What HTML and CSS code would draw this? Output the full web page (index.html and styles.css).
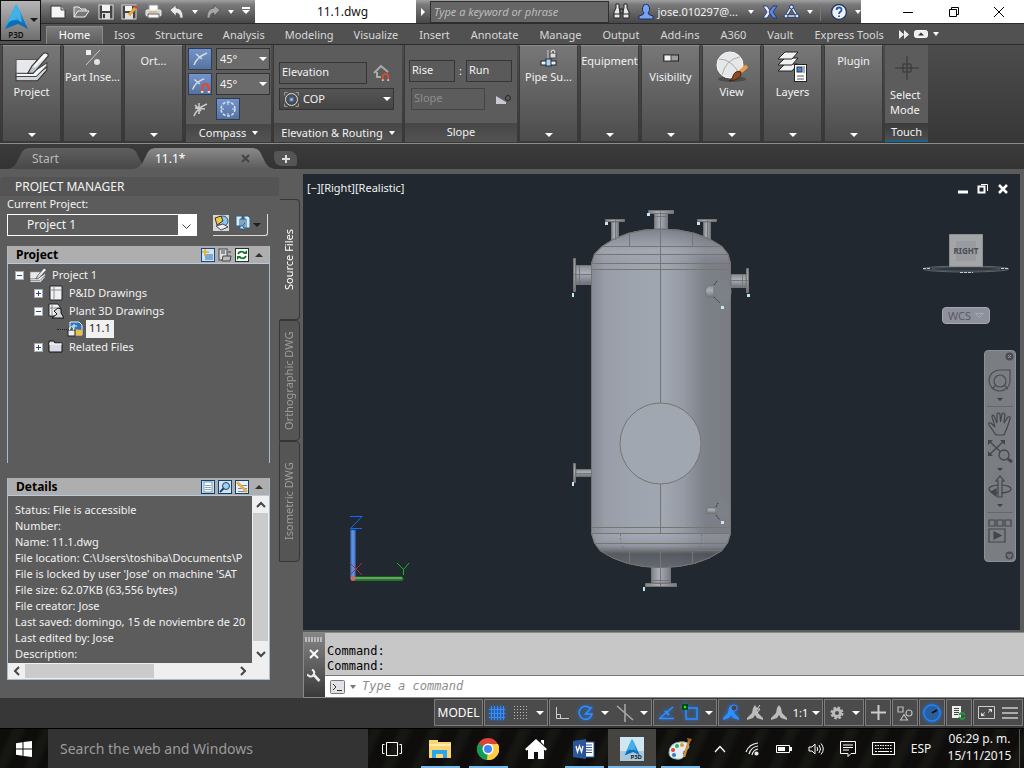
FILE: index.html
```html
<!DOCTYPE html>
<html lang="en">
<head>
<meta charset="utf-8">
<meta name="viewport" content="width=device-width, initial-scale=1">
<title>11.1.dwg</title>
<link rel="stylesheet" href="styles.css">
</head>
<body>
<svg width="0" height="0" class="defs" aria-hidden="true">
  <defs>
    <linearGradient id="blueA" x1="0" y1="0" x2="1" y2="1"><stop offset="0" stop-color="#5cc8f5"/><stop offset="1" stop-color="#0a5aa8"/></linearGradient>
    <linearGradient id="metal" x1="0" y1="0" x2="0" y2="1"><stop offset="0" stop-color="#fff"/><stop offset="1" stop-color="#b4bac2"/></linearGradient>
    <symbol id="logo" viewBox="0 0 24 26"><path d="M12 0 L16 7 L22 21 L24 25 L14 20 L12 13 L9 20 L1 25 L3 19 L9 6z" fill="url(#blueA)"/><path d="M12 0 L16 7 L18 20 L12 13 L9 20 L3 21 L9 6z" fill="#3fb2ea"/><path d="M5 18 Q13 12 23 23 L14 20 L1 25z" fill="#0b6fc0"/></symbol>
    <symbol id="stack" viewBox="0 0 32 28"><path d="M1 21H20L30 14V17L21 27H1z" fill="#d3d6da" stroke="#333"/><path d="M1 18H18L30 10V13L20 23H1z" fill="#f4f5f7" stroke="#444"/><path d="M1 7H21L14 20H1z" fill="#e6e8eb" stroke="#555"/><path d="M12 20L16 13 27 1Q32 0 31 4L19 18 17 20z" fill="url(#metal)" stroke="#333"/><path d="M18 14L28 3" stroke="#fff" stroke-width="1.500"/></symbol>
    <symbol id="arc" viewBox="0 0 20 20"><path d="M4 16 Q7 8 17 4 M6 5 L12 10" fill="none" stroke="#d5dde8" stroke-width="1.5"/></symbol>
    <symbol id="magnet" viewBox="0 0 10 10"><path d="M2 9 V5 a3 3 0 0 1 6 0 V9" fill="none" stroke="#e0492f" stroke-width="2"/><path d="M1 9 h2 M7 9 h2" stroke="#eee" stroke-width="1.5"/></symbol>
    <symbol id="wings" viewBox="0 0 18 18"><path d="M9 1 L11 4 L12 9 L17 14 V16 L11 14 L9 11 L7 14 L1 16 V14 L6 9 L7 4z" fill="currentColor"/></symbol>
    <symbol id="page" viewBox="0 0 14 16"><path d="M1 1H13V15H1z" fill="#eef1f5" stroke="#222"/><path d="M5 1V15M1 5H13" stroke="#8b8b8b"/></symbol>
  </defs>
</svg>

<header class="top">
  <button class="appbtn" aria-label="Application menu"><svg width="24" height="26"><use href="#logo"/></svg><span>P3D</span><i class="tri dark"></i></button>
  <div class="titlebar">
    <div class="qat">
      <button aria-label="New"><svg width="16" height="14" viewBox="0 0 16 14"><path d="M1 1H11L15 5V13H1z" fill="#f5f5f5" stroke="#333"/><path d="M11 1V5H15" fill="#bbb" stroke="#555"/></svg></button>
      <button aria-label="Open"><svg width="17" height="14" viewBox="0 0 17 14"><path d="M1 12V2H6L8 4H13V6" fill="#8c8c8c" stroke="#eee"/><path d="M1 12 L5 6H16L12 12z" fill="#777" stroke="#eee"/></svg></button>
      <button aria-label="Save"><svg width="16" height="16" viewBox="0 0 16 16"><rect x="1" y="1" width="14" height="14" fill="#444" stroke="#ddd"/><rect x="4" y="1" width="8" height="6" fill="#f3f3f3"/><rect x="4" y="9" width="8" height="6" fill="#ddd"/><path d="M6 10v4" stroke="#333" stroke-width="2"/></svg></button>
      <button aria-label="Save as"><svg width="17" height="16" viewBox="0 0 17 16"><rect x="1" y="1" width="14" height="14" fill="#444" stroke="#ddd"/><rect x="4" y="2" width="7" height="5" fill="#f3f3f3"/><rect x="4" y="9" width="8" height="6" fill="#ddd"/><path d="M8 11 L15 3" stroke="#e9a63a" stroke-width="3"/><path d="M14 4l2-2" stroke="#c44" stroke-width="3"/></svg></button>
      <button aria-label="Print"><svg width="17" height="16" viewBox="0 0 17 16"><path d="M4 7V1H13V7" fill="#fff" stroke="#999"/><rect x="1" y="6" width="15" height="6" rx="1" fill="#d5d5d5" stroke="#eee"/><path d="M3 14V10H14V14z" fill="#f6f6f6" stroke="#666"/><path d="M4 8H12" stroke="#e8a33a"/></svg></button>
      <button aria-label="Undo"><svg width="16" height="14" viewBox="0 0 16 14"><path d="M1 5 L7 0V3 Q14 3 14 13 H11 Q11 8 7 8V11z" fill="#e9e9e9" stroke="#555" stroke-width=".6"/></svg></button>
      <button class="tiny" aria-label="Undo list"><i class="tri s"></i></button>
      <button aria-label="Redo"><svg width="16" height="14" viewBox="0 0 16 14"><path d="M15 5 L9 0V3 Q2 3 2 13 H5 Q5 8 9 8V11z" fill="#a5a5a5" stroke="#444" stroke-width=".6"/></svg></button>
      <button class="tiny" aria-label="Redo list"><i class="tri s"></i></button>
      <button class="tiny" aria-label="Customize"><i class="tri bar"></i></button>
    </div>
    <div class="doctitle">11.1.dwg</div>
    <div class="info">
      <i class="tri right"></i>
      <input class="keyword" type="text" aria-label="Search" placeholder="Type a keyword or phrase">
      <button aria-label="Find"><svg width="17" height="17" viewBox="0 0 17 17"><g fill="#e8e8e8" stroke="#222"><path d="M3 1H6V5L7 8V15H1V9L3 5zM14 1H11V5L10 8V15H16V9L14 5z"/><path d="M7 6H10V10H7z" fill="#777"/><path d="M1 11H7M10 11H16"/></g></svg></button>
      <button class="user"><svg width="16" height="16" viewBox="0 0 16 16"><path d="M8 0a4 5 0 0 1 2 9q0 2 5 3v3H1v-3q5-1 5-3a4 5 0 0 1 2-9z" fill="#78a4ef" stroke="#1d2e63"/></svg><span>jose.010297@...</span><i class="tri s"></i></button>
      <button class="wide" aria-label="Exchange"><svg width="16" height="14" viewBox="0 0 16 14"><path d="M1 1H5L9 7 5 13H1L5 7z" fill="#e9eefc" stroke="#2c4183"/><path d="M15 1H11L7 7 11 13H15L11 7z" fill="#5f8be0" stroke="#23397a"/></svg></button>
      <button class="share" aria-label="Share"><svg width="17" height="15" viewBox="0 0 17 15"><path d="M8.500 3L3 12H14z" fill="none" stroke="#223a70" stroke-width="3"/><path d="M8.500 3L3 12H14z" fill="none" stroke="#dfe8fb" stroke-width="1.500"/><g fill="#dfe8fb" stroke="#223a70"><circle cx="8.500" cy="3" r="2"/><circle cx="3" cy="12" r="2"/><circle cx="14" cy="12" r="2"/></g></svg><i class="tri s"></i></button>
      <button class="help" aria-label="Help"><svg width="18" height="18" viewBox="0 0 18 18"><circle cx="9" cy="9" r="7.500" fill="#eef3fb" stroke="#2a3c5c" stroke-width="1.500"/><path d="M6.500 7q0-2.500 2.600-2.500T11.500 7q0 1-1.200 1.800T9 11M9 12.500v1.500" fill="none" stroke="#2457a6" stroke-width="1.800"/></svg><i class="tri s"></i></button>
    </div>
    <div class="winbtns">
      <button aria-label="Minimize"><svg width="12" height="12"><path d="M1 6.500H11" stroke="#000"/></svg></button>
      <button aria-label="Restore"><svg width="12" height="12" fill="none" stroke="#000"><path d="M1.500 3.500h7v7h-7zM3.500 3.500v-2h7v7h-2"/></svg></button>
      <button aria-label="Close"><svg width="12" height="12" stroke="#000"><path d="M1 1L11 11M11 1L1 11"/></svg></button>
    </div>
  </div>
  <nav class="tabs">
    <a href="#" class="on">Home</a><a href="#">Isos</a><a href="#">Structure</a><a href="#">Analysis</a><a href="#">Modeling</a><a href="#">Visualize</a><a href="#">Insert</a><a href="#">Annotate</a><a href="#">Manage</a><a href="#">Output</a><a href="#">Add-ins</a><a href="#">A360</a><a href="#">Vault</a><a href="#">Express Tools</a>
    <button aria-label="More tabs"><svg width="10" height="9"><path d="M0 0L5 4.500 0 9zM5 0L10 4.500 5 9z" fill="#eee"/></svg></button>
    <button aria-label="Minimize ribbon"><svg width="14" height="8"><rect x=".5" y=".5" width="13" height="7" rx="2" fill="#eee" stroke="#fff"/><path d="M4 5.500L7 2.500 10 5.500z" fill="#333"/></svg></button>
    <button aria-label="Ribbon options"><i class="tri s"></i></button>
  </nav>
</header>

<section class="ribbon">
  <button class="panel"><svg width="34" height="30"><use href="#stack"/></svg><span>Project</span><i class="tri"></i></button>
  <button class="panel"><svg class="low" width="18" height="18" viewBox="0 0 18 18"><path d="M16 1L2 16" stroke="#ccc"/><rect x="2" y="1" width="5" height="5" fill="#eee"/><circle cx="13" cy="13" r="3" fill="#dfe3ea"/></svg><span>Part Inse...</span><i class="tri"></i></button>
  <button class="panel bare"><span>Ort...</span><i class="tri"></i></button>
  <div class="group compass">
    <div class="cgrid">
      <button class="tog" aria-label="Compass"><svg width="20" height="20"><use href="#arc"/></svg></button>
      <label class="drop"><select aria-label="Angle"><option>45°</option></select></label>
      <button class="tog" aria-label="Snap"><svg width="22" height="20"><use href="#arc" width="18" height="20"/><use href="#magnet" x="11" y="8" width="11" height="11"/></svg></button>
      <label class="drop"><select aria-label="Snap angle"><option>45°</option></select></label>
      <button class="flat" aria-label="Tolerance"><svg width="16" height="16" fill="none" stroke="#ccc" stroke-width="1.500"><path d="M2 15Q5 7 15 3M3 4L9 10M7 2V13M3 7L13 8"/></svg></button>
      <button class="tog" aria-label="Toggle compass"><svg width="20" height="20" fill="none" stroke="#cfe0f5"><circle cx="10" cy="10" r="7" stroke-width="1.500" stroke-dasharray="3 1.500"/><path d="M10 3v3M10 14v3M3 10h3M14 10h3"/></svg></button>
    </div>
    <button class="cap">Compass <i class="tri s"></i></button>
  </div>
  <div class="group elev">
    <div class="egrid">
      <input type="text" aria-label="Elevation" value="Elevation">
      <button class="flat" aria-label="Elevation lock"><svg width="18" height="18" viewBox="0 0 18 18"><path d="M1 9L8 2 15 8M4 8V13H8" fill="none" stroke="#aaa" stroke-width="2"/><use href="#magnet" x="8" y="8" width="9" height="9"/></svg></button>
      <label class="drop cop"><svg width="17" height="17" fill="none" stroke="#999"><rect x="1.500" y="1.500" width="14" height="14" stroke-dasharray="3 8 3 0"/><circle cx="8.500" cy="8.500" r="6" stroke="#ddd"/><rect x="7" y="7" width="3" height="3" fill="#9fc5ff" stroke="#4d87d8"/></svg><select aria-label="Routing"><option>COP</option></select></label>
    </div>
    <button class="cap">Elevation &amp; Routing <i class="tri s"></i></button>
  </div>
  <div class="group slope">
    <div class="sgrid">
      <div class="srow"><input type="text" aria-label="Rise" value="Rise"><b>:</b><input type="text" aria-label="Run" value="Run"></div>
      <div class="srow"><input class="dis" type="text" aria-label="Slope" value="Slope" disabled><svg width="16" height="11"><path d="M0 2L10 8V10H0z" fill="#c7cad2"/><circle cx="12" cy="4" r="2.500" fill="none" stroke="#222"/></svg></div>
    </div>
    <div class="cap">Slope</div>
  </div>
  <button class="panel"><svg class="low" width="18" height="18" viewBox="0 0 18 18"><path d="M8 1v10" stroke="#ccc"/><rect x="10" y="4" width="6" height="5" fill="#ddd" stroke="#444"/><path d="M11 4q0-3 2-3t2 3" fill="none" stroke="#eee"/><rect x="1" y="12" width="15" height="4" fill="#e9f2fa" stroke="#223"/><rect x="6" y="10" width="5" height="7" fill="#aed0ea" stroke="#234"/></svg><span>Pipe Su...</span><i class="tri"></i></button>
  <button class="panel bare"><span>Equipment</span><i class="tri"></i></button>
  <button class="panel"><svg class="low" width="18" height="18" viewBox="0 0 18 18"><rect x="1.500" y="6" width="15" height="6" fill="#9c9c9c" stroke="#222"/><rect x="2" y="6" width="7" height="6" fill="#f2f2f2" stroke="#444"/></svg><span>Visibility</span><i class="tri"></i></button>
  <button class="panel"><svg width="32" height="32" viewBox="0 0 32 32"><ellipse cx="16" cy="28" rx="14" ry="3" fill="#4c4c4c"/><circle cx="14" cy="14" r="13" fill="#e6e7e8" stroke="#fafafa"/><path d="M3 8Q16 8 24 24M24 6Q10 8 6 24" fill="none" stroke="#aaa"/><path d="M31 15L23 22" stroke="#eb9b50" stroke-width="4"/><path d="M25 21q1 8-12 9 4-2 4-5 2-6 8-4z" fill="#8c4a22" stroke="#452410"/></svg><span>View</span><i class="tri"></i></button>
  <button class="panel"><svg width="32" height="32" viewBox="0 0 32 32"><g fill="#f1f1f1" stroke="#222"><path d="M1 20L8 13H21L15 20z"/><path d="M1 14L8 7H21L15 14z"/><path d="M1 8L8 1H21L15 8z"/></g><rect x="17.500" y="13.500" width="12" height="17" fill="#fff" stroke="#222"/><rect x="20" y="16" width="5" height="5" fill="#4d86c8" stroke="#235"/><path d="M27 15v7M20 25h7M20 28h7" stroke="#555"/></svg><span>Layers</span><i class="tri"></i></button>
  <button class="panel bare"><span>Plugin</span><i class="tri"></i></button>
  <button class="touch"><svg width="26" height="26" fill="none" stroke="#353535"><path d="M1 13H25M13 1V25M9 9h8v8h-8z"/></svg><span>Select Mode</span><em>Touch</em></button>
</section>

<nav class="files">
  <a href="#" class="ftab">Start</a>
  <a href="#" class="ftab on">11.1*<svg width="9" height="9"><path d="M1 1L8 8M8 1L1 8" stroke="#444" stroke-width="2"/></svg></a>
  <button class="plus" aria-label="New drawing"><svg width="10" height="10"><path d="M5 1V9M1 5H9" stroke="#ddd" stroke-width="2"/></svg></button>
</nav>

<main class="work">
  <aside class="palette">
    <div class="pbody">
      <h1>PROJECT MANAGER</h1>
      <label class="cur" for="proj">Current Project:</label>
      <div class="prow">
        <div class="combo"><select id="proj"><option>Project 1</option></select><svg width="9" height="6"><path d="M.5.500L4.500 4.500 8.500.500" fill="none" stroke="#444"/></svg></div>
        <div class="ptools">
          <button aria-label="Publish"><svg width="16" height="16" viewBox="0 0 16 16"><rect width="16" height="16" fill="#d9d7cd"/><circle cx="10" cy="6" r="5" fill="#8fc3e8" stroke="#357"/><path d="M2 3L8 1 10 6 4 10z" fill="#ecc54a" stroke="#333"/><path d="M3 11L10 9 15 12 8 15z" fill="#eee" stroke="#446"/></svg></button>
          <button aria-label="Reports"><svg width="16" height="16" viewBox="0 0 16 16" fill="#d8ecf8" stroke="#2d5f86"><path d="M1 1H7V11H1zM5 4H11V14H5zM9 1H13L15 3V13H9z"/><path d="M9 13Q6 11 10 8" fill="none"/></svg></button>
          <i class="tri dark"></i>
        </div>
      </div>
      <section class="box tree">
        <h2>Project<span class="tools">
          <button aria-label="New drawing"><svg width="14" height="14" viewBox="0 0 14 14"><rect x=".5" y=".5" width="13" height="13" fill="#cfe4f5" stroke="#1a4a80"/><path d="M4 6H12V12H4z" fill="#7fa9cf"/><path d="M4 1v7M1 4h7" stroke="#e8a826" stroke-width="1.500"/></svg></button>
          <button aria-label="Copy"><svg width="14" height="14" viewBox="0 0 14 14"><rect x="1" y="1" width="8" height="11" fill="#ddd" stroke="#444"/><path d="M5 8H13L12 13H4z" fill="#bbb" stroke="#444"/><path d="M3 3h4M3 5h4M10 4h3" stroke="#444"/></svg></button>
          <button aria-label="Refresh"><svg width="14" height="14" viewBox="0 0 14 14"><rect x=".5" y=".5" width="13" height="13" fill="#fff" stroke="#2c2c2c"/><path d="M3 6Q5 2 10 5M11 8Q9 12 4 9" fill="none" stroke="#167a2c" stroke-width="1.800"/><path d="M8 6h4V2zM6 8H2v4z" fill="#167a2c"/></svg></button>
          <i class="tri up"></i></span></h2>
        <ul>
          <li class="l0"><i class="ex m"></i><svg width="18" height="15"><use href="#stack"/></svg>Project 1</li>
          <li class="l1"><i class="ex p"></i><svg width="14" height="16"><use href="#page"/></svg>P&amp;ID Drawings</li>
          <li class="l1"><i class="ex m"></i><svg width="16" height="16" viewBox="0 0 16 16"><path d="M1 1H10L12 4V13H1z" fill="#eef1f5" stroke="#222"/><path d="M4 1V13M1 5H12" stroke="#888"/><path d="M6 8L10 5 13 6V10L16 15H4L9 11z" fill="#d6d9dd" stroke="#111"/></svg>Plant 3D Drawings</li>
          <li class="l2"><i class="dots"></i><svg width="17" height="16" viewBox="0 0 17 16"><path d="M3 1H12L15 4V14H3z" fill="#2f73b8" stroke="#eef"/><path d="M5 8L15 9V14H9z" fill="#f0be3c"/><path d="M7 3V8M5 5H10" stroke="#dff"/><rect x="1" y="9" width="7" height="6" fill="#eee" stroke="#222"/><path d="M2.500 9V7q2-3 4 0V9" fill="none" stroke="#eee"/></svg><span>11.1</span></li>
          <li class="l1"><i class="ex p"></i><svg width="16" height="14"><path d="M1 12V1H6L7 3H14V12z" fill="#d9dbe6" stroke="#111"/><path d="M1 4H14" stroke="#fff"/></svg>Related Files</li>
        </ul>
      </section>
      <section class="box details">
        <h2>Details<span class="tools">
          <button aria-label="Details"><svg width="14" height="14"><rect x=".5" y=".5" width="13" height="13" fill="#cfe4f5" stroke="#12406f"/><rect x="3" y="2" width="8" height="10" fill="#fff" stroke="#7799bb"/><path d="M4 5.500h6M4 7.500h6M4 9.500h6" stroke="#8ab"/></svg></button>
          <button aria-label="Preview"><svg width="14" height="14"><rect x=".5" y=".5" width="13" height="13" fill="#cfe4f5" stroke="#12406f"/><circle cx="8" cy="6" r="3.500" fill="#9fd0ee" stroke="#246"/><path d="M2 12L6 8" stroke="#246" stroke-width="2"/></svg></button>
          <button aria-label="Work history"><svg width="14" height="14"><rect x=".5" y=".5" width="13" height="13" fill="#e8eef3" stroke="#12406f"/><path d="M3 5.500h9M3 8.500h9M3 11.500h8" stroke="#789"/><path d="M2 2L12 12" stroke="#e8b04a" stroke-width="2.500"/></svg></button>
          <i class="tri up"></i></span></h2>
        <div class="dgrid">
          <div class="dtext">Status: File is accessible
Number:
Name: 11.1.dwg
File location: C:\Users\toshiba\Documents\P
File is locked by user 'Jose' on machine 'SAT
File size: 62.07KB (63,556 bytes)
File creator: Jose
Last saved: domingo, 15 de noviembre de 20
Last edited by: Jose
Description:</div>
          <div class="vbar"><svg width="10" height="7"><path d="M1 6L5 2 9 6" /></svg><span></span><svg width="10" height="7"><path d="M1 1L5 5 9 1"/></svg></div>
          <div class="hbar"><svg width="7" height="10"><path d="M6 1L2 5 6 9"/></svg><span></span><svg width="7" height="10"><path d="M1 1L5 5 1 9"/></svg></div>
        </div>
      </section>
    </div>
    <div class="vtabs"><a href="#" class="on">Source Files</a><a href="#">Orthographic DWG</a><a href="#">Isometric DWG</a></div>
  </aside>

  <div class="right">
    <section class="canvas">
      <div class="vlabel">[−][Right][Realistic]</div>
      <svg class="vessel" width="200" height="400" viewBox="561 202 200 400" role="img" aria-label="Pressure vessel">
        <defs>
          <linearGradient id="shell"><stop offset="0" stop-color="#858a93"/><stop offset=".1" stop-color="#989da7"/><stop offset=".3" stop-color="#9ea4ae"/><stop offset=".52" stop-color="#a1a7b1"/><stop offset=".66" stop-color="#959aa4"/><stop offset=".82" stop-color="#7c8088"/><stop offset="1" stop-color="#7a7d83"/></linearGradient>
          <linearGradient id="dome" x2="0" y2="1"><stop offset="0" stop-color="#565a62" stop-opacity=".5"/><stop offset=".65" stop-color="#aab0bd" stop-opacity=".35"/><stop offset="1" stop-color="#9096a0" stop-opacity=".1"/></linearGradient>
          <linearGradient id="bowl" x2="0" y2="1"><stop offset="0" stop-color="#aab2c0" stop-opacity=".3"/><stop offset=".35" stop-color="#868b94" stop-opacity=".5"/><stop offset=".5" stop-color="#5c5f65" stop-opacity=".7"/><stop offset=".6" stop-color="#46494e" stop-opacity=".8"/><stop offset="1" stop-color="#5d626c" stop-opacity=".9"/></linearGradient>
          <linearGradient id="nv"><stop offset="0" stop-color="#7d828a"/><stop offset=".4" stop-color="#a9afba"/><stop offset="1" stop-color="#767a82"/></linearGradient>
          <linearGradient id="nh" x2="0" y2="1"><stop offset="0" stop-color="#868b94"/><stop offset=".4" stop-color="#a9afba"/><stop offset="1" stop-color="#6c7077"/></linearGradient>
        </defs>
        <g stroke="#777572">
          <g fill="url(#nv)"><path d="M654.500 213V232H667.500V213z"/><path d="M648.500 210.500H673.500V213.500H648.500z"/><path d="M611.500 222V242H618.500V222z"/><path d="M605.500 219.500H624.500V221.500H605.500z"/><path d="M703.500 222V242H710.500V222z"/><path d="M697.500 219.500H716.500V221.500H697.500z"/><path d="M651.500 565V583H670.500V565z"/><path d="M645.500 583.500H676.500V586.500H645.500z"/></g>
          <g fill="url(#nh)"><path d="M576 265.500H592V284.500H576z"/><path d="M573.500 258.500H575.500V291.500H573.500z"/><path d="M731 274.500H746V287.500H731z"/><path d="M746.500 268.500H748.500V292.500H746.500z"/><path d="M576 469.500H592V476.500H576z"/><path d="M573.500 463.500H575.500V482.500H573.500z"/></g>
          <path d="M591.500 263.500L594.500 254 602 246.500Q625 229 661 229Q698 229 722 246.500L728 254 730.500 263.500V533.500L727.500 543 722 550.500Q698 567.500 661 567.500Q624 567.500 600 550.500L594.500 543 591.500 533.500z" fill="url(#shell)"/>
          <path d="M591.500 263.500L594.500 254 602 246.500Q625 229 661 229Q698 229 722 246.500L728 254 730.500 263.500z" fill="url(#dome)"/>
          <path d="M591.500 533.500L594.500 543 600 550.500Q624 567.500 661 567.500Q698 567.500 722 550.500L727.500 543 730.500 533.500z" fill="url(#bowl)"/>
          <g fill="none"><path d="M602 246.500H722M595 254.500H728M591 263.500H731M591 269.500H731M592 527.500H731M592 533.500H731M594 543.500H728M600 550.500H722M629.500 234V246M692.500 234V246M629.500 550V563M692.500 550V563M660.500 210V404M660.500 484V533M660.500 550V587M579.500 265V285M742.500 274V288M574 274.500H592M731 280.500H749M576 473.500H592M615.500 219V240M707.500 219V240M654 216.500H668M651 580.500H671"/><path d="M620.500 534Q620 544 625 550M701.500 534Q702 544 698 550" stroke-dasharray="2 2"/></g>
          <circle cx="660.500" cy="443.500" r="40.500" fill="#a1a7b0"/>
          <path d="M714 285.500H708Q703 291 708 297.500H714z" fill="url(#nh)"/><ellipse cx="722.500" cy="291.500" rx="8.500" ry="12.500" fill="#7c8088" stroke="#817f7d"/>
          <path d="M716 507.500H707V513.500H716z" fill="url(#nh)"/><ellipse cx="722.500" cy="511" rx="6.500" ry="9.500" fill="#7c8088" stroke="#817f7d"/>
        </g>
        <path d="M714 285L717 281M714 297L720 303M716 507L718 503M716 515L720 520" stroke="#34383e" stroke-dasharray="2 1"/>
        <g fill="#bfe9f7"><path d="M647 213h3v3h-3zM605 222h3v3h-3zM697 222h3v3h-3zM572 293h2v4h-2zM747 294h3v3h-3zM721 306h3v3h-3zM572 482h2v4h-2zM721 521h3v3h-3zM643 587h2v4h-2z"/></g>
      </svg>
      <div class="mdi"><button aria-label="Minimize drawing"><svg width="12" height="12"><path d="M1 9H11" stroke="#fff" stroke-width="3"/></svg></button><button aria-label="Restore drawing"><svg width="12" height="12" fill="none" stroke="#fff"><path d="M1.500 3.500h6v6h-6z" stroke-width="2"/><path d="M4 1.500h6.500V8"/></svg></button><button aria-label="Close drawing"><svg width="12" height="12"><path d="M2 2L10 10M10 2L2 10" stroke="#fff" stroke-width="2.500"/></svg></button></div>
      <div class="cube">
        <svg width="88" height="42" viewBox="0 0 88 42"><ellipse cx="44" cy="36" rx="43" ry="3" fill="#30373e" stroke="#5f666c"/><ellipse cx="44" cy="36" rx="34" ry="2" fill="none" stroke="#4b5258"/><path d="M1 35.500H9M79 35.500H87M38 39.500h13" stroke="#ccc" stroke-dasharray="3 1"/><path d="M27.500 1.500H60.500V33.500H27.500z" fill="#a3a5a6" stroke="#8d9092"/><rect x="34" y="8" width="20" height="20" fill="#989ca0"/></svg><span>RIGHT</span>
      </div>
      <button class="wcs">WCS <svg width="9" height="6"><path d="M.5.500H8.500L4.500 4.500z" fill="none" stroke="#a7a8b2"/></svg></button>
      <div class="navbar">
        <button class="edge" aria-label="Close"><svg width="9" height="9"><circle cx="4.500" cy="4.500" r="4" fill="#4b4e53"/><path d="M3 3l3 3M6 3L3 6" stroke="#999"/></svg></button>
        <button aria-label="Wheel"><svg width="24" height="24" fill="none" stroke="#4a4d52" stroke-width="1.200"><path d="M12 1H22V13A10.500 10.500 0 1 1 12 1z"/><circle cx="12" cy="12" r="6"/><path d="M8 16L4 20M16 16L20 20"/></svg></button>
        <i class="tri nav"></i><hr>
        <button aria-label="Pan"><svg width="24" height="24" fill="none" stroke="#43464b" stroke-width="1.200"><path d="M8 23L1 13Q0 10 3 11L7 15 4 5Q4 2 6 4L9 11 9 2Q10 0 12 2L12.500 10 14 2Q16 0 17 3L16 11 20 5Q23 4 22 7L19 16 16 23z"/></svg></button>
        <button aria-label="Zoom"><svg width="26" height="24" fill="none" stroke="#43464b" stroke-width="1.300"><path d="M2 2L17 16M17 2L2 16"/><path d="M1 6V1H6zM13 1H18V6zM1 12V17H6z" fill="#43464b" stroke="none"/><circle cx="17" cy="16" r="5" fill="#7a7d81"/><path d="M21 20L25 23" stroke-width="3"/></svg></button>
        <i class="tri nav"></i>
        <button aria-label="Orbit"><svg width="24" height="24" fill="none" stroke="#43464b" stroke-width="1.200"><ellipse cx="12" cy="14" rx="11" ry="4"/><path d="M10 22V6H8L12 1 16 6H14V22z" fill="#7a7d81"/><path d="M3 17L8 14V21z" fill="#43464b"/></svg></button>
        <i class="tri nav"></i><hr>
        <button aria-label="ShowMotion"><svg width="24" height="25" fill="none" stroke="#43464b" stroke-width="1.200"><path d="M1 2h6v6H1zM9 2h6v6H9zM17 2h6v6h-6zM1 11H17V24H1z"/><path d="M6 14V21L13 17.500z" fill="#43464b"/></svg></button>
        <button class="edge" aria-label="Options"><svg width="9" height="9"><circle cx="4.500" cy="4.500" r="4" fill="#4b4e53"/><path d="M2 4h5M3 6h3" stroke="#999"/></svg></button>
      </div>
      <svg class="ucs" width="64" height="70" viewBox="347 514 64 70"><rect x="350.500" y="530" width="5" height="48" fill="#4d7fcc" stroke="#2e559a"/><path d="M353 530V576" stroke="#6fa0ea"/><path d="M355 576.500H402L404 578.500 402 581H355z" fill="#2f7030"/><path d="M355 578H402" stroke="#56ad55" stroke-width="2"/><circle cx="353" cy="578.500" r="2.500" fill="#c96a6a"/><path d="M350 516.500H362L350.500 528.500H362" fill="none" stroke="#0f68ff"/><path d="M350 563L362 575M362 563L350 575" stroke="#b03038"/><path d="M397 563L403.500 569.500 409 563M403.500 569V575" fill="none" stroke="#18b818"/></svg>
    </section>
    <section class="cmd">
      <div class="grip"><i></i><button aria-label="Close"><svg width="10" height="10"><path d="M1 1L9 9M9 1L1 9" stroke="#fff" stroke-width="2"/></svg></button><button aria-label="Customize"><svg width="14" height="14" viewBox="0 0 14 14"><path d="M6 5L12.500 12" stroke="#eee" stroke-width="2.600"/><path d="M5 .5Q8 2 7 5T3 7.500L0 5.500" fill="none" stroke="#eee" stroke-width="2"/></svg></button></div>
      <div class="cbody"><div class="hist">Command:<br>Command:</div>
        <div class="cin"><svg width="15" height="14"><rect x=".5" y=".5" width="14" height="13" rx="1" fill="#dfe3e8" stroke="#777"/><path d="M3 4L6 7 3 10M7 10.500H12" fill="none" stroke="#333"/></svg><i class="tri grey"></i><input type="text" aria-label="Command" placeholder="Type a command"></div></div>
    </section>
  </div>
</main>

<footer class="status">
  <div class="sg"><button class="model">MODEL</button></div>
  <div class="sg"><button class="on" aria-label="Grid"><svg width="16" height="16" stroke="#2f8fff"><path d="M2.500 1V15M5.500 1V15M8.500 1V15M11.500 1V15M14.500 1V15M0 4.500H16M0 8.500H16M0 12.500H16"/></svg></button><button aria-label="Snap"><svg width="16" height="16" stroke="#bbb" stroke-dasharray="1 2"><path d="M1 1.500H16M1 4.500H16M1 7.500H16M1 10.500H16M1 13.500H16"/></svg></button><button class="ar" aria-label="Snap menu"><i class="tri"></i></button></div>
  <div class="sg"><button aria-label="Ortho"><svg width="14" height="14" fill="none" stroke="#ccc"><path d="M1.500 1V12.500H14M1.500 8.500H5.500V12"/></svg></button><button class="on" aria-label="Polar"><svg width="16" height="16" fill="none" stroke="#2f8fff" stroke-width="1.500"><path d="M12 3A6.500 6.500 0 1 0 14 9H7.500L14 2"/></svg></button><button class="ar" aria-label="Polar menu"><i class="tri"></i></button><button class="w26" aria-label="Isoplane"><svg width="18" height="20" stroke="#aaa" stroke-width="1.500"><path d="M9 1V19M1 3L17 17"/></svg></button><button class="ar" aria-label="Isoplane menu"><i class="tri"></i></button></div>
  <div class="sg"><button class="on" aria-label="Tracking"><svg width="17" height="14" stroke="#2f8fff" fill="none" stroke-width="1.500"><path d="M1 12.500H16M2 12L15 1"/><path d="M7 5l4 4" stroke-width="2"/></svg></button><button class="on" aria-label="Object snap"><svg width="17" height="17" fill="none" stroke="#2f8fff" stroke-width="1.500"><path d="M4 4H15V15H4z"/><rect x="1" y="1" width="4" height="4" fill="#0f0" stroke="#030"/></svg></button><button class="ar" aria-label="Snap modes"><i class="tri"></i></button></div>
  <div class="sg"><button class="on blue" aria-label="Annotation visibility"><svg width="18" height="18"><use href="#wings"/><circle cx="12" cy="4" r="3" fill="#444" stroke="#2f8fff"/></svg></button><button aria-label="Auto scale"><svg width="18" height="18"><use href="#wings"/><path d="M14 1L11 5H14L11 9" fill="none" stroke="#ddd"/></svg></button><button aria-label="Annotation scale"><svg width="18" height="18"><use href="#wings"/></svg></button><button class="scale">1:1<i class="tri"></i></button></div>
  <div class="sg"><button aria-label="Workspace"><svg width="14" height="14"><circle cx="7" cy="7" r="5" fill="none" stroke="#bbb" stroke-width="3" stroke-dasharray="2.400 1.500"/><circle cx="7" cy="7" r="3.500" fill="none" stroke="#bbb" stroke-width="3"/></svg></button><button class="ar" aria-label="Workspaces"><i class="tri"></i></button></div>
  <div class="sg"><button aria-label="Monitor"><svg width="15" height="15"><path d="M7.500 0V15M0 7.500H15" stroke="#ccc" stroke-width="2"/></svg></button></div>
  <div class="sg"><button aria-label="Isolate"><svg width="16" height="16" fill="none" stroke="#bbb" stroke-width="1.200"><path d="M1 2h5v5H1zM3.500 15L7 9.500 10.500 15z"/><circle cx="12" cy="8" r="3"/></svg></button></div>
  <div class="sg"><button class="on" aria-label="Hardware"><svg width="20" height="20"><circle cx="10" cy="10" r="8" fill="#2a5f9e" stroke="#1d86ff" stroke-width="1.500"/><path d="M10 10L15 7" stroke="#111" stroke-width="2"/></svg></button></div>
  <div class="sg"><button aria-label="Trusted"><svg width="16" height="16"><rect x="1" y="1" width="9" height="12" fill="#eee"/><path d="M3 3.500h5M3 5.500h5M3 7.500h5M3 9.500h4" stroke="#444"/><path d="M8 10q3-4 6 0M14 12q-3 4-6 0" fill="none" stroke="#1d9c3c" stroke-width="2"/></svg></button></div>
  <div class="sg"><button aria-label="Clean screen"><svg width="17" height="13" fill="none" stroke="#ccc"><path d="M.5.500H16.500V12.500H.5z"/><path d="M4 9L7 6.500M13 4L10 6.500"/><path d="M3 6.500V10H7zM10 3H14V6.500z" fill="#ddd" stroke="none"/></svg></button><button aria-label="Customization"><svg width="16" height="14"><path d="M0 2H16M0 7H16M0 12H16" stroke="#ccc" stroke-width="1.500"/></svg></button></div>
</footer>

<footer class="taskbar">
  <button aria-label="Start"><svg width="16" height="16" fill="#fff"><path d="M0 2.300L6.500 1.300V7.500H0zM7.500 1.100L16 0V7.500H7.500zM0 8.500H6.500V14.700L0 13.700zM7.500 8.500H16V16L7.500 14.900z"/></svg></button>
  <input class="cortana" type="text" aria-label="Search" placeholder="Search the web and Windows">
  <button aria-label="Task view"><svg width="20" height="14" fill="none" stroke="#fff"><path d="M4.500.500H15.500V13.500H4.500zM2.500 2.500H.5V11.500H2.500M17.500 2.500H19.500V11.500H17.500"/></svg></button>
  <button class="run" aria-label="File Explorer"><svg width="22" height="20"><path d="M0 1H9V3H22V19H0z" fill="#f7d673"/><path d="M0 5H22V7H0z" fill="#fdeaa9"/><path d="M3 19V11H18V19H14V15H7V19z" fill="#2ba5e5"/></svg></button>
  <button class="run" aria-label="Chrome"><svg width="22" height="22"><circle cx="11" cy="11" r="11" fill="#db4437"/><path d="M11 11L1.500 5.500A11 11 0 0 0 10 22z" fill="#0f9d58"/><path d="M11 11L10 22A11 11 0 0 0 21 6H11z" fill="#ffcd40"/><circle cx="11" cy="11" r="5.500" fill="#fff"/><circle cx="11" cy="11" r="4" fill="#4285f4"/></svg></button>
  <button aria-label="Home"><svg width="22" height="20" fill="#fff"><path d="M11 0L22 10 20 12V11H19V20H13V13H9V20H3V11H2V12L0 10zM16 1h3v5l-3-3z"/></svg></button>
  <button class="run" aria-label="Word"><svg width="22" height="20"><rect x="11" y="3" width="10" height="15" fill="#fff" stroke="#2b579a"/><path d="M13 6h6M13 8.500h6M13 11h6M13 13.500h6" stroke="#2b579a"/><path d="M0 2L13 0V20L0 18z" fill="#2b579a"/><path d="M3 7L4.500 13 6.500 7 8.500 13 10 7" fill="none" stroke="#fff" stroke-width="1.300"/></svg></button>
  <button class="run act" aria-label="Plant 3D"><svg width="24" height="24"><rect width="24" height="24" fill="#cfe6f3"/><rect y="14" width="24" height="10" fill="#a9c8da"/><use href="#logo" x="3" y="2" width="18" height="17"/></svg><em>P3D</em></button>
  <button class="run" aria-label="Paint"><svg width="24" height="22"><path d="M1 15Q1 5 12 4 21 3 21 9 20 12 16 13 14 15 16 18 14 22 8 21 1 20 1 15z" fill="#e4edf4" stroke="#8ba"/><circle cx="5" cy="12" r="2" fill="#d43"/><circle cx="9" cy="8" r="2" fill="#3a6"/><circle cx="14" cy="7" r="2" fill="#e93"/><circle cx="6" cy="17" r="2" fill="#37c"/><path d="M21 3L16 19" stroke="#d98c3c" stroke-width="2.500"/><path d="M19 0L24 1 21 6z" fill="#a5682c"/></svg></button>
  <div class="tray">
    <button aria-label="Hidden icons"><svg width="12" height="8"><path d="M1 7L6 1.500 11 7" fill="none" stroke="#fff" stroke-width="1.300"/></svg></button>
    <button aria-label="Network"><svg width="14" height="14" fill="none" stroke="#eee" stroke-width="1.200"><path d="M1 10Q4 2 13 1M4 12Q6 5 13 4M7 13Q8 8 13 7"/><circle cx="11.500" cy="11.500" r="1.500" fill="#fff"/></svg></button>
    <button aria-label="Battery"><svg width="16" height="10"><path d="M.5 1.500H13.500V8.500H.5z" fill="none" stroke="#fff"/><path d="M2 3H9V7H2zM14 3H16V7H14z" fill="#fff"/></svg></button>
    <button aria-label="Volume"><svg width="17" height="14" fill="none" stroke="#fff"><path d="M1 5H4L7 2V12L4 9H1zM9 5q1.500 2 0 4M11 3q3 4 0 8M13 1.500q4.500 5.500 0 11"/></svg></button>
    <button aria-label="Notifications"><svg width="16" height="16" fill="none" stroke="#fff"><path d="M.5.500H15.500V12.500H11L8 15.500V12.500H.5zM3 4H13M3 6.500H13M3 9H9"/></svg></button>
    <button class="kb" aria-label="Keyboard"><svg width="23" height="13" fill="none" stroke="#fff"><rect x=".5" y=".5" width="22" height="12"/><path d="M3 3.500H20M3 6.500H20" stroke-dasharray="1.500 1"/><path d="M3 9.500H20" stroke-dasharray="2 1 11 1"/></svg></button>
    <button class="lang">ESP</button>
    <button class="clock">06:29 p. m.<br>15/11/2015</button>
  </div>
</footer>
</body>
</html>
```
FILE: styles.css
```css
* { box-sizing: border-box; }
body {
  margin: 0; min-height: 100vh; display: flex; flex-direction: column;
  background: #373737; color: #f2f2f2;
  font: 12px/16px "Noto Sans", "Open Sans", sans-serif;
}
.defs { position: absolute; }
button, input, select { font: inherit; color: inherit; border: 0; background: none; padding: 0; margin: 0; min-width: 0; border-radius: 0; }
select { appearance: none; width: 100%; height: 100%; }
a { color: inherit; text-decoration: none; }
svg { display: block; flex: none; }
button { display: flex; align-items: center; justify-content: center; white-space: nowrap; }

.tri { display: block; flex: none; width: 0; height: 0; border: 4px solid transparent; border-top-color: #fff; border-bottom: 0; }
.tri.s { border-width: 4px 3px 0; }
.tri.dark { border-top-color: #1c1c1c; }
.tri.grey { border-top-color: #777; border-width: 4px 3px 0; }
.tri.up { border-top: 0; border-bottom: 4px solid #333; }
.tri.right { border: 4px solid transparent; border-left-color: #fff; border-right: 0; }
.tri.nav { border-width: 3px 3px 0; border-top-color: #3d4045; }
.tri.bar { position: relative; }
.tri.bar::before { content: ""; position: absolute; left: -4px; top: -7px; width: 8px; height: 2px; background: #fff; }

/* header */
.top { display: grid; grid-template: 24px 20px / 41px 1fr; background: #515151; }
.appbtn {
  grid-row: 1 / 3; height: 41px; position: relative; flex-direction: column; color: #111;
  background: linear-gradient(#b5b5b5, #6f6f6f); border: 1px solid #111; padding: 3px 9px 0 0; justify-content: flex-start;
}
.appbtn span { font-size: 8px; line-height: 10px; font-weight: 600; }
.appbtn .tri { position: absolute; right: 2px; top: 17px; }
.titlebar { display: flex; border-bottom: 1px solid #2c2c2c; }
.qat { display: flex; width: 214px; padding-left: 5px; background: linear-gradient(#a0a0a0, #7a7a7a 20%, #474747); }
.qat button { width: 24px; }
.qat .tiny { width: 12px; }
.qat .tiny:last-child { width: 18px; }
.doctitle { flex: 1; min-width: 80px; background: #fff; color: #111; text-align: center; line-height: 23px; padding-left: 14px; }
.info { display: flex; align-items: center; background: linear-gradient(#a0a0a0, #7a7a7a 20%, #474747); width: 445px; padding-left: 5px; }
.keyword { width: 180px; height: 22px; margin-left: 5px; background: #666; border: 1px solid #2f2f2f; padding: 0 3px; font-style: italic; font-size: 11px; }
.keyword::placeholder { color: #bdbdbd; opacity: 1; }
.info button { gap: 7px; margin-left: 4px; }
.info .user { margin-left: 8px; }
.user span { width: 84px; font-size: 11px; text-align: left; margin-left: -3px; }
.info .wide { margin-left: 8px; }
.info .share { margin-left: 6px; }
.info .help { margin-left: 7px; padding-left: 9px; border-left: 1px solid #777; }
.winbtns { display: flex; background: #fff; width: 163px; padding: 0 2px 0 24px; }
.winbtns button { width: 46px; }
.tabs { display: flex; align-items: flex-end; padding-left: 5px; color: #d8d8d8; overflow: hidden; }
.tabs a { font-size: 11px; line-height: 18px; height: 18px; padding: 0 10px; white-space: nowrap; flex: none; }
.tabs a:nth-of-type(n+7) { margin-left: 1px; }
.tabs .on { color: #fff; background: linear-gradient(#7c7c7c, #5c5c5c); border: 1px solid #8a8a8a; border-bottom: 0; line-height: 16px; width: 57px; text-align: center; margin-right: 1px; }
.tabs button { height: 20px; margin-left: 5px; }

/* ribbon */
.ribbon { display: flex; gap: 2px; padding: 0 3px 1px 2px; height: 100px; background: linear-gradient(#4c4c4c, #373737); border-bottom: 1px solid #8b8b8b; border-top: 1px solid #2c2c2c; }
.panel { width: 59px; border: 1px solid #3a3a3a; border-top-color: #8c8c8c; background: linear-gradient(#777, #4c4c4c); flex-direction: column; justify-content: flex-start; padding: 5px 0 4px; overflow: hidden; font-size: 11px; }
.panel svg { height: 32px; }
.panel .low { height: 18px; }
.panel span { line-height: 16px; padding-top: 1px; }
.panel .low { margin-top: -2px; margin-bottom: 1px; }
.panel.bare { padding-top: 6px; }
.panel .tri { margin-top: auto; }
.group { display: flex; flex-direction: column; background: #5c5c5c; border-left: 1px solid #3a3a3a; font-size: 11px; }
.cap { margin-top: auto; height: 19px; line-height: 18px; background: linear-gradient(#464646, #535353); text-align: center; gap: 6px; }
.compass { width: 86px; } .elev { width: 129px; } .slope { width: 113px; }
.cgrid { display: grid; grid-template: 23px 23px 23px / 24px 54px; gap: 2px 4px; padding: 3px 2px; }
.tog { background: linear-gradient(#7393ca, #57739f); border: 1px solid #2d3c57; height: 22px; width: 24px; }
.flat { width: 24px; height: 22px; }
.drop { position: relative; display: flex; align-items: center; border: 1px solid #333; background: #6b6b6b; height: 22px; }
.drop select { padding-left: 3px; }
.drop::after { content: ""; position: absolute; right: 2px; top: 8px; border: 4px solid transparent; border-top-color: #fff; border-bottom: 0; pointer-events: none; }
.egrid { display: grid; grid-template-columns: 88px 24px; gap: 4px 3px; padding: 17px 5px 0; }
.group input { background: #5a5a5a; border: 1px solid #353535; height: 22px; padding: 0 2px 3px; width: 100%; }
.group .cop { grid-column: 1 / 3; background: linear-gradient(#555, #454545); padding-left: 3px; }
.sgrid { padding: 15px 5px 0 4px; display: grid; gap: 6px; }
.srow { display: flex; align-items: center; justify-content: space-between; }
.srow input { width: 46px; } .srow b { font-weight: 400; }
.group .dis { width: 74px; margin-left: 2px; color: #8d8d8d; border-color: #444; background: none; }
.touch { width: 43px; flex-direction: column; background: #5c5c5c; font-size: 11px; padding-top: 10px; justify-content: flex-start; }
.touch span { white-space: normal; line-height: 15px; text-align: left; width: 33px; padding-top: 6px; }
.touch em { font-style: normal; margin-top: auto; width: 100%; height: 19px; line-height: 17px; background: linear-gradient(#3a3a3a, #4e4e4e); border-bottom: 2px solid #17658f; }

/* file tabs */
.files { display: flex; height: 25px; padding: 3px 0 0 8px; background: linear-gradient(#3b3b3b, #333); align-items: flex-end; }
.ftab {
  display: flex; align-items: center; justify-content: space-between; width: 142px; height: 21px; padding: 0 24px; color: #b9b9b9;
  background: linear-gradient(#5f5f5f, #484848);
  clip-path: polygon(0 100%, 5px 90%, 8px 75%, 14px 18%, 17px 5%, 21px 0, calc(100% - 21px) 0, calc(100% - 17px) 5%, calc(100% - 14px) 18%, calc(100% - 8px) 75%, calc(100% - 5px) 90%, 100% 100%);
}
.ftab.on { width: 140px; margin-left: -16px; padding: 0 24px 0 21px; color: #fff; background: linear-gradient(#8a8a8a, #5c5c5c); }
.plus { width: 23px; height: 15px; margin: 0 0 3px; background: #555; border-radius: 3px 8px 3px 8px; }

/* palette */
.work { flex: 1; display: flex; background: #5c5c5c; padding-top: 5px; }
.palette { width: 303px; display: flex; flex: none; }
.pbody { width: 279px; padding: 3px 9px 18px 7px; display: flex; flex-direction: column; }
h1 { margin: 0 -9px 0 -7px; padding: 0 15px; font-size: 12px; line-height: 19px; font-weight: 400; background: #545454; border-radius: 4px 4px 0 0; }
.cur { line-height: 15px; font-size: 11px; }
.prow { display: flex; justify-content: space-between; margin-top: 3px; }
.combo { position: relative; width: 190px; height: 22px; border: 1px solid #fff; }
.combo select { padding: 0 19px; border-right: 18px solid #fff; }
.combo svg { position: absolute; right: 5px; top: 9px; pointer-events: none; }
.ptools { display: flex; gap: 6px; width: 55px; height: 22px; border-right: 1px solid #ddd; border-bottom: 1px solid #ddd; border-radius: 0 0 3px; align-items: flex-start; padding-top: 1px; margin-right: 2px; }
.ptools .tri { margin: 8px 0 0 -4px; }
.box h2 { margin: 0; display: flex; justify-content: space-between; padding: 0 6px 0 8px; font-size: 12px; line-height: 17px; height: 18px; color: #000; background: #aeaeae; border-bottom: 1px solid #b9cbdb; font-weight: 700; }
.tools { display: flex; gap: 3px; align-items: center; }
.tools .tri { margin-left: 3px; }
.tree { margin-top: 10px; height: 217px; border: 1px solid #a9bccb; border-width: 0 1px; }
ul { list-style: none; margin: 2px 0; padding: 0; font-size: 11px; }
li { display: flex; align-items: center; gap: 5px; height: 18px; }
.l0 { padding-left: 7px; } .l1 { padding-left: 26px; } .l2 { padding-left: 49px; }
.l1 svg { width: 16px; }
.l2 span { background: #f1f1f1; color: #222; padding: 0 3px; height: 18px; margin-left: -3px; }
.ex { width: 9px; height: 9px; background: linear-gradient(#1d4d9a, #1d4d9a) center / 5px 1px no-repeat, #fff; border: 1px solid #aaa; }
.ex.p { background: linear-gradient(#1d4d9a, #1d4d9a) center / 5px 1px no-repeat, linear-gradient(#1d4d9a, #1d4d9a) center / 1px 5px no-repeat, #fff; }
.dots { width: 10px; border-top: 1px dotted #222; margin-right: -5px; }
.details { flex: 1; margin-top: 15px; display: flex; flex-direction: column; border: 1px solid #a9bccb; border-top: 0; }
.dgrid { flex: 1; display: grid; grid-template: minmax(0, 1fr) 16px / minmax(0, 1fr) 17px; background: #efefef; }
.dtext { background: #5c5c5c; white-space: pre; overflow: hidden; padding: 6px 0 0 7px; font-size: 11px; }
.vbar, .hbar { display: flex; align-items: center; gap: 5px; fill: none; stroke: #444; stroke-width: 2; }
.vbar { flex-direction: column; padding: 5px 0; }
.vbar span { width: 15px; flex: 1; background: #cbcbcb; margin-bottom: 5px; }
.hbar { padding: 0 5px; justify-content: space-between; }
.hbar span { width: 129px; height: 14px; background: #cbcbcb; margin-right: auto; }
.vtabs { width: 21px; padding-top: 25px; display: flex; flex-direction: column; }
.vtabs a { height: 121px; writing-mode: vertical-rl; transform: rotate(180deg); text-align: center; line-height: 18px; font-size: 11px; color: #9d9d9d; background: #555; border: 1px solid #363636; border-radius: 4px 0 0 4px; }
.vtabs .on { color: #fff; background: #5c5c5c; border-right-color: #5c5c5c; }

/* drawing */
.right { flex: 1; min-width: 0; display: flex; flex-direction: column; }
.canvas { flex: 1; position: relative; display: flex; align-items: center; justify-content: center; background: #212830; margin-right: 4px; padding-right: 1px; overflow: hidden; }
.vlabel { position: absolute; left: 4px; top: 6px; font-size: 11px; }
.mdi { position: absolute; right: 11px; top: 9px; display: flex; gap: 8px; }
.cube { position: absolute; right: 10px; top: 59px; }
.cube span { position: absolute; left: 28px; top: 11px; width: 32px; font-size: 8px; line-height: 14px; font-weight: 700; color: #454b52; text-align: center; }
.wcs { position: absolute; right: 30px; top: 133px; width: 48px; height: 17px; border-radius: 4px; background: #8e909c; border: 1px solid #a5a6b1; color: #585b66; font-size: 11px; gap: 4px; }
.navbar { position: absolute; right: 4px; top: 176px; width: 32px; height: 212px; background: #7a7d81; border: 1px solid #8e9194; border-radius: 4px; display: flex; flex-direction: column; align-items: center; }
.navbar hr { width: 26px; margin: 4px 0 2px; border: 0; border-top: 1px solid #64676c; }
.navbar .tri { margin: 5px 0 1px; }
.navbar button { margin-top: 3px; }
.navbar .edge { align-self: flex-end; margin: 1px; }
.navbar .edge:first-child { margin-bottom: 5px; }
.navbar .edge:last-child { margin-top: auto; }
.ucs { position: absolute; left: 44px; bottom: 46px; }
.cmd { display: flex; height: 66px; margin-top: 2px; border: 1px solid #8a8a8a; border-right: 0; }
.grip { width: 21px; background: linear-gradient(#858585, #3a3a3a); display: flex; flex-direction: column; align-items: center; gap: 10px; padding: 4px 2px 0 0; }
.grip i { width: 17px; height: 5px; background: repeating-linear-gradient(90deg, #bbb 0 2px, transparent 2px 3px); margin-bottom: -3px; }
.cbody { flex: 1; display: flex; flex-direction: column; background: #c7c7c7; color: #000; font: 12px/15px "DejaVu Sans Mono", monospace; }
.hist { flex: 1; padding: 11px 2px 0; }
.cin { display: flex; align-items: center; gap: 5px; height: 22px; background: #fff; border-top: 1px solid #777; padding-left: 5px; }
.cin input { flex: 1; font-style: italic; padding-left: 1px; outline: 0; }
.cin input::placeholder { color: #8d8d8d; opacity: 1; }

/* status bar */
.status { display: flex; justify-content: flex-end; gap: 1px; height: 30px; padding: 1px 1px 2px 0; background: #373737; }
.sg { display: flex; border: 1px solid #7d7d7d; background: #4b4b4b; }
.sg button { width: 24px; color: #bbb; }
.sg .on svg { filter: drop-shadow(0 0 2px #1677ff); }
.sg .blue { color: #2f8fff; }
.sg .ar { width: 14px; }
.sg .w26 { width: 25px; }
.sg .model { width: 47px; color: #fff; }
.sg .scale { width: 31px; gap: 4px; color: #fff; font-size: 11px; }

/* taskbar */
.taskbar { display: flex; height: 40px; background: repeating-linear-gradient(115deg, #0e0d0b 0 9px, #161613 14px 19px, #0c0b0a 27px); border-top: 1px solid #000; }
.taskbar > button { width: 48px; }
.cortana { width: 320px; background: #333; padding: 0 12px; font-size: 14px; }
.cortana::placeholder { color: #9b9b9b; opacity: 1; }
.run { background: linear-gradient(#76b9ed, #76b9ed) bottom / 39px 2px no-repeat; }
.run.act { background: linear-gradient(#76b9ed, #76b9ed) bottom / 100% 2px no-repeat, #464440; position: relative; }
.act em { position: absolute; right: 14px; bottom: 8px; font: 700 6px/6px "Noto Sans", sans-serif; color: #123; }
.tray { flex: 1; display: flex; justify-content: flex-end; }
.tray button { width: 32px; }
.tray .kb { width: 38px; }
.tray .lang { width: 38px; }
.tray .clock { width: 80px; margin-right: 4px; padding-bottom: 3px; line-height: 17px; border-right: 1px solid #555; }
```
